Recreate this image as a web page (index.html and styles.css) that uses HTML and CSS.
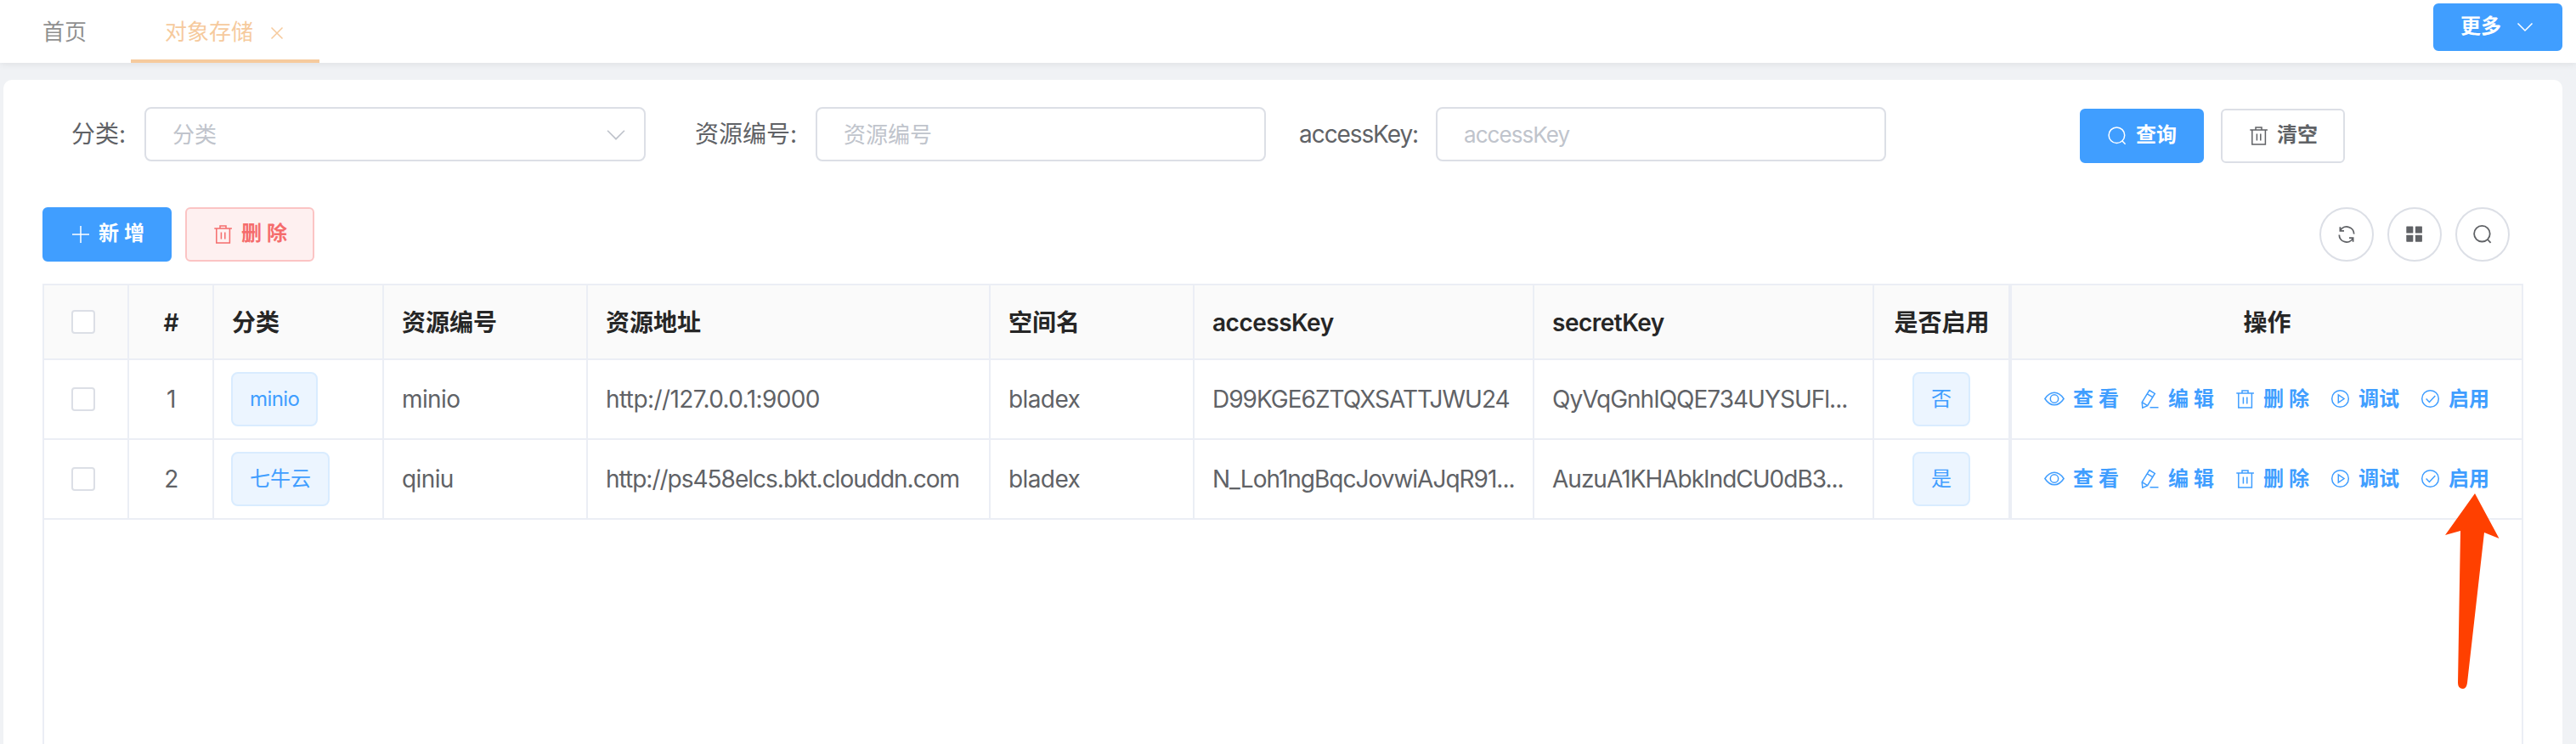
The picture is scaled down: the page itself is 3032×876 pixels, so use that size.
FILE: index.html
```
<!DOCTYPE html>
<html lang="zh-CN">
<head>
<meta charset="utf-8">
<title>对象存储</title>
<link rel="stylesheet" href="styles.css">
</head>
<body>
<svg class="sprite" aria-hidden="true">
  <symbol id="i-plus" viewBox="0 0 24 24"><path d="M13 2v20M3 12h20"/></symbol>
  <symbol id="i-trash" viewBox="0 0 24 24"><path d="M2.300 5h20.600M9 5V1.900h7V5M4.800 5v17h15.600V5M10.400 9.500v8M14.800 9.500v8"/></symbol>
  <symbol id="i-search" viewBox="0 0 24 24"><circle cx="11.4" cy="11.2" r="9.3"/><path d="M18 18l3.6 3.8"/></symbol>
  <symbol id="i-down" viewBox="0 0 24 24"><path d="M3.5 7.5l8.5 8.5 8.5-8.5"/></symbol>
  <symbol id="i-refresh" viewBox="0 0 24 24"><path d="M4.6 7.4A8.6 8.6 0 0 1 20.700 11.600M4.400 3.200v4.600h4.600M19.400 16.600A8.600 8.600 0 0 1 3.300 12.400M19.600 20.800v-4.600h-4.600"/></symbol>
  <symbol id="i-grid" viewBox="0 0 24 24"><g fill="currentColor" stroke="none"><rect x="2.300" y="2.500" width="8" height="8" rx=".6"/><rect x="12.900" y="2.500" width="8" height="8" rx=".6"/><rect x="2.300" y="12.700" width="8" height="8" rx=".6"/><rect x="12.900" y="12.700" width="8" height="8" rx=".6"/></g></symbol>
  <symbol id="i-eye" viewBox="0 0 24 24"><path d="M.9 11.500C4 6.800 7.600 4.200 12 4.200S20 6.800 23.100 11.500C20 16.200 16.400 18.800 12 18.800S4 16.200.9 11.500z"/><circle cx="12" cy="11.500" r="4.700"/></symbol>
  <symbol id="i-edit" viewBox="0 0 24 24"><path d="M11.800 1.500l6.500 3.900-8.600 14.200-5.900 2.500-.6-6.400zM9.300 5.800l6.500 3.800M3.200 15.700l6.500 3.900M12.500 21.700h10"/></symbol>
  <symbol id="i-play" viewBox="0 0 24 24"><circle cx="12.500" cy="11.500" r="9.800"/><path d="M10.300 7v9l6.700-4.500z"/></symbol>
  <symbol id="i-check" viewBox="0 0 24 24"><circle cx="12.500" cy="11.500" r="9.800"/><path d="M7.600 11.400l3.800 4 6.900-7.300"/></symbol>
  <symbol id="i-close" viewBox="0 0 24 24"><path d="M5.500 5.500l13 13M18.500 5.500l-13 13"/></symbol>
</svg>

<header class="tabs">
  <nav class="tabs-nav">
    <a class="tab">首页</a>
    <a class="tab tab-active">对象存储<svg class="icon tab-close"><use href="#i-close"/></svg></a>
  </nav>
  <button class="btn btn-primary btn-more"><span class="text">更多</span><svg class="icon"><use href="#i-down"/></svg></button>
</header>

<main class="card">
  <form class="search">
    <label class="label label-type">分类:</label>
    <div class="input select"><span>分类</span><svg class="icon arrow"><use href="#i-down"/></svg></div>
    <label class="label label-code">资源编号:</label>
    <div class="input">资源编号</div>
    <label class="label label-key">accessKey:</label>
    <div class="input latin">accessKey</div>
    <div class="search-actions">
      <button type="button" class="btn btn-primary"><svg class="icon"><use href="#i-search"/></svg><span class="text">查询</span></button>
      <button type="button" class="btn"><svg class="icon"><use href="#i-trash"/></svg><span class="text">清空</span></button>
    </div>
  </form>

  <div class="toolbar">
    <div class="toolbar-left">
      <button class="btn btn-primary"><svg class="icon"><use href="#i-plus"/></svg><span class="text spaced">新增</span></button>
      <button class="btn btn-danger"><svg class="icon"><use href="#i-trash"/></svg><span class="text spaced">删除</span></button>
    </div>
    <div class="toolbar-right">
      <button class="round"><svg class="icon"><use href="#i-refresh"/></svg></button>
      <button class="round"><svg class="icon"><use href="#i-grid"/></svg></button>
      <button class="round"><svg class="icon"><use href="#i-search"/></svg></button>
    </div>
  </div>

  <section class="table">
    <div class="row head">
      <div class="cell check"><i class="checkbox"></i></div>
      <div class="cell center">#</div>
      <div class="cell">分类</div>
      <div class="cell">资源编号</div>
      <div class="cell">资源地址</div>
      <div class="cell">空间名</div>
      <div class="cell latin">accessKey</div>
      <div class="cell latin">secretKey</div>
      <div class="cell center">是否启用</div>
      <div class="cell center fixed">操作</div>
    </div>
    <div class="row">
      <div class="cell check"><i class="checkbox"></i></div>
      <div class="cell center">1</div>
      <div class="cell"><span class="tag latin">minio</span></div>
      <div class="cell">minio</div>
      <div class="cell">http://127.0.0.1:9000</div>
      <div class="cell">bladex</div>
      <div class="cell long">D99KGE6ZTQXSATTJWU24</div>
      <div class="cell long">QyVqGnhIQQE734UYSUFl...</div>
      <div class="cell center"><span class="tag">否</span></div>
      <div class="cell center fixed actions">
        <a class="action"><svg class="icon"><use href="#i-eye"/></svg><span class="spaced">查看</span></a>
        <a class="action"><svg class="icon"><use href="#i-edit"/></svg><span class="spaced">编辑</span></a>
        <a class="action"><svg class="icon"><use href="#i-trash"/></svg><span class="spaced">删除</span></a>
        <a class="action"><svg class="icon"><use href="#i-play"/></svg>调试</a>
        <a class="action"><svg class="icon"><use href="#i-check"/></svg>启用</a>
      </div>
    </div>
    <div class="row">
      <div class="cell check"><i class="checkbox"></i></div>
      <div class="cell center">2</div>
      <div class="cell"><span class="tag">七牛云</span></div>
      <div class="cell">qiniu</div>
      <div class="cell long">http://ps458elcs.bkt.clouddn.com</div>
      <div class="cell">bladex</div>
      <div class="cell long">N_Loh1ngBqcJovwiAJqR91...</div>
      <div class="cell long">AuzuA1KHAbkIndCU0dB3...</div>
      <div class="cell center"><span class="tag">是</span></div>
      <div class="cell center fixed actions">
        <a class="action"><svg class="icon"><use href="#i-eye"/></svg><span class="spaced">查看</span></a>
        <a class="action"><svg class="icon"><use href="#i-edit"/></svg><span class="spaced">编辑</span></a>
        <a class="action"><svg class="icon"><use href="#i-trash"/></svg><span class="spaced">删除</span></a>
        <a class="action"><svg class="icon"><use href="#i-play"/></svg>调试</a>
        <a class="action"><svg class="icon"><use href="#i-check"/></svg>启用</a>
      </div>
    </div>
  </section>
</main>

<svg class="pointer" viewBox="0 0 66 234"><path d="M36 1L1 50l18-5-3 179q0 7 6 7 4 0 5-7L47 47l17.500 7z"/></svg>
</body>
</html>
```
FILE: styles.css
```
* { box-sizing: border-box; }

body {
  margin: 0;
  height: 876px;
  overflow: hidden;
  display: flex;
  flex-direction: column;
  background: #f0f2f5;
  color: #606266;
  font-family: Inter, "Noto Sans CJK SC", sans-serif;
  font-size: 28px;
  line-height: 1.2;
}

.sprite { position: absolute; width: 0; height: 0; }

.icon {
  width: 24px;
  height: 24px;
  flex: none;
  fill: none;
  stroke: currentColor;
  stroke-width: 1.5;
}

/* Tab bar */
.tabs {
  flex: none;
  height: 74px;
  padding: 0 16px 0 14px;
  display: flex;
  justify-content: space-between;
  background: #fff;
  box-shadow: 0 2px 8px rgba(0, 0, 0, .07);
}

.tabs-nav { display: flex; }

.tab {
  height: 74px;
  padding: 1px 52px 0 36px;
  display: flex;
  align-items: center;
  font-size: 26px;
  color: #909090;
}

.tab-active {
  width: 222px;
  padding: 5px 0 0 40px;
  color: #f6ca9d;
  border-bottom: 4px solid #f6ca9d;
}

.tab-close { margin: 3px 0 0 16px; }

/* Buttons */
.btn {
  height: 64px;
  padding: 0 30px;
  display: flex;
  align-items: center;
  gap: 10px;
  border: 2px solid #dcdfe6;
  border-radius: 6px;
  background: #fff;
  font: 600 24px/28px Inter, "Noto Sans CJK SC", sans-serif;
  color: #606266;
  white-space: nowrap;
}

.btn .text { padding-bottom: 3px; }
.btn-primary { background: #409eff; border-color: #409eff; color: #fff; }
.btn-danger { background: #fef0f0; border-color: #fbc4c4; color: #f56c6c; }
.btn-more { height: 56px; margin-top: 4px; gap: 16px; }
.spaced { letter-spacing: 6px; margin-right: -6px; }

/* Content card */
.card {
  flex: 1;
  margin: 20px 16px 0 4px;
  padding: 32px 46px 0;
  display: flex;
  flex-direction: column;
  background: #fff;
  border-radius: 10px 10px 0 0;
}

.search { flex: none; display: flex; align-items: center; height: 64px; }

.label { text-align: right; padding: 2px 22px 0 0; white-space: nowrap; }
.label-type { width: 120px; }
.label-code { width: 200px; }
.label-key { width: 200px; letter-spacing: -1.1px; padding-right: 21px; }

.input {
  width: 530px;
  height: 64px;
  padding: 2px 30px 0 31px;
  display: flex;
  align-items: center;
  justify-content: space-between;
  border: 2px solid #dcdfe6;
  border-radius: 8px;
  font-size: 26px;
  color: #c0c4cc;
}

.input.latin { letter-spacing: -.95px; }
.select { width: 590px; padding-right: 19px; }
.arrow { width: 28px; height: 28px; }

.search-actions { display: flex; gap: 20px; margin: 4px 0 0 228px; }

.toolbar {
  flex: none;
  display: flex;
  justify-content: space-between;
  margin: 54px 16px 26px 0;
}

.toolbar-left, .toolbar-right { display: flex; gap: 16px; }

.round {
  width: 64px;
  height: 64px;
  padding: 0 1px 1px 0;
  display: flex;
  align-items: center;
  justify-content: center;
  border: 2px solid #dcdfe6;
  border-radius: 50%;
  background: #fff;
  color: #606266;
}

.round .icon { stroke-width: 1.8; }

/* Data table */
.table {
  flex: 1;
  width: 2920px;
  border: 2px solid #ebeef5;
  border-bottom: 0;
}

.row {
  display: grid;
  grid-template-columns: 100px 100px 200px 240px 474px 240px 400px 400px 160px 602px;
  height: 94px;
}

.cell {
  display: flex;
  align-items: center;
  padding: 1px 17px 0 21px;
  border-right: 2px solid #ebeef5;
  border-bottom: 2px solid #ebeef5;
  letter-spacing: -.6px;
  white-space: nowrap;
  min-width: 0;
}

.cell.long { letter-spacing: -1px; }
.cell.center { justify-content: center; padding: 1px 0 0 1px; }
.cell.fixed { border-left: 2px solid #ebeef5; border-right: 0; }
.cell.check { padding: 0 0 0 32px; }

.head { height: 88px; }
.head .cell { padding-top: 3px; background: #fafafa; color: #262626; font-weight: 600; letter-spacing: 0; }
.head .latin { letter-spacing: -.5px; }
.head .check { padding-top: 0; }

.checkbox {
  width: 28px;
  height: 28px;
  border: 2px solid #dcdfe6;
  border-radius: 4px;
  background: #fff;
}

.tag {
  height: 64px;
  margin: -1px 0 0 -1px;
  padding: 0 20px;
  display: flex;
  align-items: center;
  border: 2px solid #d9ecff;
  border-radius: 8px;
  background: #ecf5ff;
  font-size: 24px;
  letter-spacing: 0;
  color: #409eff;
}

.tag.latin { letter-spacing: -.6px; }

.cell.actions { gap: 24px; padding: 0; letter-spacing: 0; }

.action {
  display: flex;
  align-items: center;
  gap: 10px;
  font-size: 24px;
  font-weight: 600;
  color: #409eff;
}

/* Annotation arrow lying over the table */
.pointer {
  position: absolute;
  left: 2877px;
  top: 580px;
  width: 66px;
  height: 234px;
  fill: #ff4000;
}
```
